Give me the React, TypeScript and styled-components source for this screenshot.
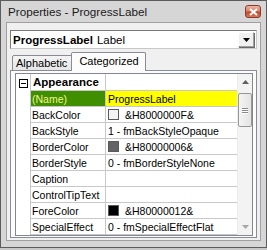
import React from "react";
import styled, { createGlobalStyle } from "styled-components";

const GlobalStyle = createGlobalStyle`
  html, body { margin: 0; padding: 0; background: #c8c8c8; }
  #root { width: 267px; height: 250px; overflow: hidden; }
`;

const Window = styled.div`
  width: 267px;
  height: 248px;
  box-sizing: border-box;
  overflow: hidden;
  background: #d6d6d6;
  border: 1px solid #5c5c5c;
  display: flex;
  flex-direction: column;
  font-family: "Liberation Sans", Arial, sans-serif;
  color: #000;
`;

const TitleBar = styled.div`
  height: 21px;
  flex: none;
  display: flex;
  align-items: center;
  padding: 0 5px 0 7px;
  font-size: 11.7px;
  color: #1a1a1a;
`;

const CloseBtn = styled.div`
  margin-left: auto;
  width: 16px;
  height: 13px;
  box-sizing: border-box;
  border: 1px solid #8c3b28;
  border-radius: 3px;
  background: linear-gradient(#eeb4a2 0%, #d9826a 45%, #c24a2c 55%, #d6745a 100%);
  display: flex;
  align-items: center;
  justify-content: center;
`;

const Client = styled.div`
  flex: 1;
  margin: 0 5px 6px 5px;
  border: 1px solid #a0a0a0;
  background: #f0f0f0;
  padding: 7px 3px 2px 3px;
  display: flex;
  flex-direction: column;
`;

const Combo = styled.div`
  height: 19px;
  flex: none;
  box-sizing: border-box;
  border: 1px solid #7a7a7a;
  border-right-color: #c8c8c8;
  border-bottom-color: #c8c8c8;
  background: #fff;
  display: flex;
  align-items: center;
  padding: 0 1px 0 2px;
  font-size: 11.5px;
`;

const ComboName = styled.b`
  font-weight: bold;
  margin-right: 4px;
`;

const DropBtn = styled.div`
  margin-left: auto;
  width: 16px;
  height: 15px;
  box-sizing: border-box;
  border: 1px solid #a0a0a0;
  border-top-color: #fff;
  border-left-color: #fff;
  box-shadow: 1px 1px 0 #696969;
  background: #f0f0f0;
  display: flex;
  align-items: center;
  justify-content: center;
  margin-right: 1px;
`;

const TabStrip = styled.div`
  height: 19px;
  flex: none;
  margin-top: 3px;
  margin-bottom: -1px;
  padding-left: 2px;
  display: flex;
  align-items: flex-end;
  position: relative;
  z-index: 1;
  font-size: 11px;
`;

const Tab = styled.div<{ $active?: boolean }>`
  box-sizing: border-box;
  height: ${(p) => (p.$active ? 19 : 16)}px;
  border: 1px solid #898c95;
  border-bottom: ${(p) => (p.$active ? "none" : "1px solid #898c95")};
  border-radius: 2px 2px 0 0;
  margin-left: ${(p) => (p.$active ? -2 : 0)}px;
  padding: ${(p) => (p.$active ? "2px 6px 0 7px" : "1px 5px 0 3px")};
  background: ${(p) => (p.$active ? "#fcfcfc" : "linear-gradient(#f4f4f4, #e6e6e6)")};
  line-height: 13px;
  white-space: nowrap;
`;

const Page = styled.div`
  flex: none;
  border: 1px solid #898c95;
  background: #fcfcfc;
  padding: 2px 3px 1px 4px;
`;

const Grid = styled.div`
  height: 163px;
  box-sizing: border-box;
  border: 1px solid #828790;
  background: #fff;
  display: flex;
`;

const Rows = styled.div`
  flex: 1;
  display: flex;
  flex-direction: column;
  font-size: 10.5px;
`;

const Row = styled.div<{ $first?: boolean }>`
  display: grid;
  grid-template-columns: 15px 75px 1fr;
  height: ${(p) => (p.$first ? 17 : 16)}px;
`;

const Gutter = styled.div`
  border-right: 1px solid #c8c8c8;
  display: flex;
  align-items: center;
  justify-content: center;
  padding-left: 1px;
  padding-top: 2px;
`;

const MinusBox = styled.div`
  width: 9px;
  height: 9px;
  box-sizing: border-box;
  border: 1px solid #000;
  position: relative;
  &::after {
    content: "";
    position: absolute;
    left: 1px;
    right: 1px;
    top: 3px;
    height: 1px;
    background: #000;
  }
`;

const NameCell = styled.div<{ $sel?: boolean; $cat?: boolean }>`
  border-right: 1px solid #c8c8c8;
  border-bottom: 1px solid #c8c8c8;
  padding-left: ${(p) => (p.$cat ? 2 : 1)}px;
  display: flex;
  align-items: center;
  white-space: nowrap;
  overflow: visible;
  position: relative;
  z-index: ${(p) => (p.$cat ? 1 : 0)};
  background: ${(p) => (p.$sel ? "#3f8f00" : "transparent")};
  color: ${(p) => (p.$sel ? "#f4f48a" : "#000")};
  font-weight: ${(p) => (p.$cat ? "bold" : "normal")};
  font-size: ${(p) => (p.$cat ? "11.5px" : "10.5px")};
`;

const ValueCell = styled.div<{ $sel?: boolean }>`
  border-bottom: 1px solid #c8c8c8;
  padding-left: 2px;
  display: flex;
  align-items: center;
  white-space: nowrap;
  overflow: hidden;
  background: ${(p) => (p.$sel ? "#ffff00" : "transparent")};
`;

const Swatch = styled.span<{ $c: string }>`
  width: 11px;
  height: 11px;
  box-sizing: border-box;
  border: 1px solid #5a5a5a;
  background: ${(p) => p.$c};
  margin-right: 6px;
  flex: none;
`;

const Scroll = styled.div`
  width: 15px;
  flex: none;
  background: #f3f3f3;
  border-left: 1px solid #ececec;
  display: flex;
  flex-direction: column;
  box-sizing: border-box;
`;

const Arrow = styled.div`
  height: 16px;
  display: flex;
  align-items: center;
  justify-content: center;
`;

const Thumb = styled.div`
  margin: 3px 0 0 0;
  height: 34px;
  box-sizing: border-box;
  border: 1px solid #979797;
  border-radius: 2px;
  background: linear-gradient(90deg, #f4f4f4, #e4e4e4);
  display: flex;
  flex-direction: column;
  align-items: center;
  justify-content: center;
  gap: 1px;
`;

const Grip = styled.div`
  width: 6px;
  height: 1px;
  background: #8a8a8a;
  box-shadow: 0 1px 0 #fff;
`;

const Spacer = styled.div`
  flex: 1;
`;

type Prop = { name: string; value: string; swatch?: string; sel?: boolean };

const props: Prop[] = [
  { name: "(Name)", value: "ProgressLabel", sel: true },
  { name: "BackColor", value: "&H8000000F&", swatch: "#f4f4f4" },
  { name: "BackStyle", value: "1 - fmBackStyleOpaque" },
  { name: "BorderColor", value: "&H80000006&", swatch: "#646464" },
  { name: "BorderStyle", value: "0 - fmBorderStyleNone" },
  { name: "Caption", value: "" },
  { name: "ControlTipText", value: "" },
  { name: "ForeColor", value: "&H80000012&", swatch: "#000000" },
  { name: "SpecialEffect", value: "0 - fmSpecialEffectFlat" },
];

export default function App() {
  return (
    <>
      <GlobalStyle />
      <Window>
        <TitleBar>
          Properties - ProgressLabel
          <CloseBtn>
            <svg width="9" height="8" viewBox="0 0 9 8">
              <path d="M1 1 L8 7 M8 1 L1 7" stroke="#fff" strokeWidth="2" />
            </svg>
          </CloseBtn>
        </TitleBar>
        <Client>
          <Combo>
            <ComboName>ProgressLabel</ComboName>Label
            <DropBtn>
              <svg width="7" height="4" viewBox="0 0 7 4">
                <path d="M0 0 H7 L3.5 4 Z" fill="#000" />
              </svg>
            </DropBtn>
          </Combo>
          <TabStrip>
            <Tab>Alphabetic</Tab>
            <Tab $active>Categorized</Tab>
          </TabStrip>
          <Page>
            <Grid>
              <Rows>
                <Row $first>
                  <Gutter>
                    <MinusBox />
                  </Gutter>
                  <NameCell $cat>Appearance</NameCell>
                  <ValueCell />
                </Row>
                {props.map((p) => (
                  <Row key={p.name}>
                    <Gutter />
                    <NameCell $sel={p.sel}>{p.name}</NameCell>
                    <ValueCell $sel={p.sel}>
                      {p.swatch && <Swatch $c={p.swatch} />}
                      {p.value}
                    </ValueCell>
                  </Row>
                ))}
              </Rows>
              <Scroll>
                <Arrow>
                  <svg width="7" height="4" viewBox="0 0 7 4">
                    <path d="M0 4 H7 L3.5 0 Z" fill="#606060" />
                  </svg>
                </Arrow>
                <Thumb>
                  <Grip />
                  <Grip />
                  <Grip />
                </Thumb>
                <Spacer />
                <Arrow>
                  <svg width="7" height="4" viewBox="0 0 7 4">
                    <path d="M0 0 H7 L3.5 4 Z" fill="#a8a8a8" />
                  </svg>
                </Arrow>
              </Scroll>
            </Grid>
          </Page>
        </Client>
      </Window>
    </>
  );
}
